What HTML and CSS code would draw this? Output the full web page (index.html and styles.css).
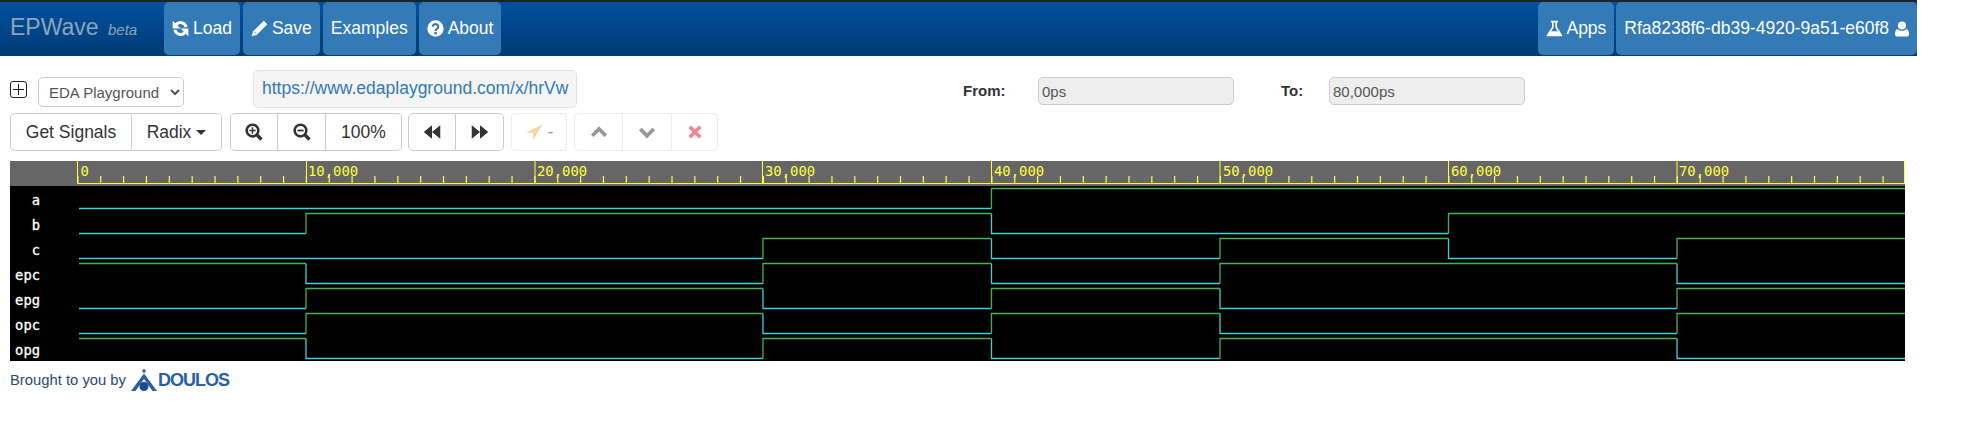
FILE: index.html
```html
<!DOCTYPE html>
<html lang="en">
<head>
    <meta charset="UTF-8">
    <title>EPWave</title>
    <link rel="stylesheet" href="styles.css">
</head>
<body>

<div class="navbar">
    <a class="brand">EPWave <small>beta</small></a>
    <a class="nav-btn">
        <svg class="ico" viewBox="0 0 24 24"><path d="M20 10A8.500 8.500 0 0 0 5.500 6.500L4 8" fill="none" stroke="#fff" stroke-width="4.200"/><path d="M1 1v11h11z" fill="#fff"/><path d="M4 14a8.500 8.500 0 0 0 14.500 3.500L20 16" fill="none" stroke="#fff" stroke-width="4.200"/><path d="M23 23V12H12z" fill="#fff"/></svg>
        Load
    </a>
    <a class="nav-btn">
        <svg class="ico" viewBox="0 0 24 24"><path d="M18 1l5 5L8 21l-7 2 2-7z" fill="#fff"/><path d="M4.500 16.500l3 3" stroke="#337ab7" stroke-width="1.200"/></svg>
        Save
    </a>
    <a class="nav-btn">Examples</a>
    <a class="nav-btn">
        <svg class="ico" viewBox="0 0 24 24"><circle cx="12" cy="12" r="11.500" fill="#fff"/><path d="M8 9.500a4 3.600 0 1 1 6.200 3c-1.500 1-2.200 1.200-2.200 3" fill="none" stroke="#337ab7" stroke-width="3"/><rect x="10.200" y="17" width="3.600" height="3.200" fill="#337ab7"/></svg>
        About
    </a>
    <div class="nav-right">
        <a class="nav-btn">
            <svg class="ico" viewBox="0 0 24 24"><path d="M7 1h10v2.500h-1.500v6.500L23 21.500c.5 1-.2 1.500-1 1.500H2c-.8 0-1.500-.5-1-1.500L8.500 10V3.500H7z" fill="#fff"/><path d="M10.800 3.500v7.200L7.500 16h9l-3.300-5.300V3.500z" fill="#337ab7"/></svg>
            Apps
        </a>
        <a class="nav-btn">
            Rfa8238f6-db39-4920-9a51-e60f8
            <svg class="ico ico-user" viewBox="0 0 24 26"><circle cx="12" cy="7" r="7" fill="#fff"/><path d="M4 13c2 2 5 3 8 3s6-1 8-3c3 1 4 5 4 9 0 2-1 4-4 4H4c-3 0-4-2-4-4 0-4 1-8 4-9z" fill="#fff"/></svg>
        </a>
    </div>
</div>

<div class="row-top">
    <span class="plus-box"></span>
    <select class="source">
        <option>EDA Playground</option>
    </select>
    <div class="share"><a>https://www.edaplayground.com/x/hrVw</a></div>
    <label class="range-label from">From:</label>
    <input class="range-input" type="text" value="0ps" disabled>
    <label class="range-label to">To:</label>
    <input class="range-input" type="text" value="80,000ps" disabled>
</div>

<div class="row-tools">
    <div class="btn-group">
        <button class="btn w-signals">Get Signals</button>
        <button class="btn w-radix">Radix <span class="caret"></span></button>
    </div>
    <div class="btn-group zoom-group">
        <button class="btn w-zoom">
            <svg class="tool-ico" viewBox="0 0 24 24"><circle cx="10" cy="10" r="7.800" fill="none" stroke="#333" stroke-width="3.400"/><path d="M15.500 15.500L22 22" stroke="#333" stroke-width="4.600"/><path d="M5.800 10h8.400M10 5.800v8.400" stroke="#333" stroke-width="2"/></svg>
        </button>
        <button class="btn w-zoom">
            <svg class="tool-ico" viewBox="0 0 24 24"><circle cx="10" cy="10" r="7.800" fill="none" stroke="#333" stroke-width="3.400"/><path d="M15.500 15.500L22 22" stroke="#333" stroke-width="4.600"/><path d="M5.800 10h8.400" stroke="#333" stroke-width="2.400"/></svg>
        </button>
        <button class="btn w-pct">100%</button>
    </div>
    <div class="btn-group nav-group">
        <button class="btn w-nav">
            <svg class="tool-ico" viewBox="0 0 24 24"><path d="M12 3v18L1 12zM23 3v18L12 12z" fill="#333"/></svg>
        </button>
        <button class="btn w-nav">
            <svg class="tool-ico" viewBox="0 0 24 24"><path d="M1 3v18l11-9zM12 3v18l11-9z" fill="#333"/></svg>
        </button>
    </div>
    <div class="btn-group off">
        <button class="btn w-cursor">
            <svg class="tool-ico" viewBox="0 0 24 24"><path d="M23 2L11 23V13H1z" fill="#f0ad4e"/></svg>
            -
        </button>
    </div>
    <div class="btn-group off">
        <button class="btn w-move">
            <svg class="tool-ico" viewBox="0 0 24 24"><path d="M3 17l9-9 9 9" fill="none" stroke="#333" stroke-width="5"/></svg>
        </button>
        <button class="btn w-move">
            <svg class="tool-ico" viewBox="0 0 24 24"><path d="M3 8l9 9 9-9" fill="none" stroke="#333" stroke-width="5"/></svg>
        </button>
        <button class="btn w-del">
            <svg class="tool-ico" viewBox="0 0 24 24"><path d="M5 5l14 14M19 5L5 19" fill="none" stroke="#e8132a" stroke-width="5"/></svg>
        </button>
    </div>
</div>

<svg class="wave" width="1895" height="200" viewBox="0 0 1895 200">
    <rect width="1895" height="25" fill="#666"/>
    <rect y="25" width="1895" height="175" fill="#000"/>

    <g class="ruler">
        <path d="M67.500 22.500H1895"/>
        <line class="minor" x1="67.300" y1="18.700" x2="1895" y2="18.700"/>
        <path d="M67.500 0V22M296.500 0V22M525 0V22M752.500 0V22M981.500 0V22M1210 0V22M1438.500 0V22M1667 0V22M1894.500 0V22"/>
    </g>
    <g class="labels">
        <text x="70.500" y="15">0</text>
        <text x="298" y="15">10,000</text>
        <text x="527" y="15">20,000</text>
        <text x="755" y="15">30,000</text>
        <text x="984" y="15">40,000</text>
        <text x="1213" y="15">50,000</text>
        <text x="1441" y="15">60,000</text>
        <text x="1669" y="15">70,000</text>
    </g>

    <g class="names">
        <text x="30" y="44">a</text>
        <text x="30" y="69">b</text>
        <text x="30" y="94">c</text>
        <text x="30" y="119">epc</text>
        <text x="30" y="144">epg</text>
        <text x="30" y="169">opc</text>
        <text x="30" y="194">opg</text>
    </g>

    <g class="low">
        <path d="M69 47.500H981.500"/>
        <path d="M69 72.500H296M981.500 52.500V72.500H1438.500"/>
        <path d="M69 97.500H753M981.500 77.500V97.500H1210M1438.500 77.500V97.500H1667"/>
        <path d="M296 102.500V122.500H753M981.500 102.500V122.500H1210M1667 102.500V122.500H1895"/>
        <path d="M69 147.500H296M753 127.500V147.500H981.500M1210 127.500V147.500H1667"/>
        <path d="M69 172.500H296M753 152.500V172.500H981.500M1210 152.500V172.500H1667"/>
        <path d="M296 177.500V197.500H753M981.500 177.500V197.500H1210M1667 177.500V197.500H1895"/>
    </g>
    <g class="high">
        <path d="M981.500 47.500V27.500H1895"/>
        <path d="M296 72.500V52.500H981.500M1438.500 72.500V52.500H1895"/>
        <path d="M753 97.500V77.500H981.500M1210 97.500V77.500H1438.500M1667 97.500V77.500H1895"/>
        <path d="M69 102.500H296M753 122.500V102.500H981.500M1210 122.500V102.500H1667"/>
        <path d="M296 147.500V127.500H753M981.500 147.500V127.500H1210M1667 147.500V127.500H1895"/>
        <path d="M296 172.500V152.500H753M981.500 172.500V152.500H1210M1667 172.500V152.500H1895"/>
        <path d="M69 177.500H296M753 197.500V177.500H981.500M1210 197.500V177.500H1667"/>
    </g>
</svg>

<div class="footer">
    <span>Brought to you by</span>
    <svg class="logo" viewBox="0 0 26 22"><circle cx="13" cy="2" r="1.800" fill="#2a5ea8"/><path d="M13 4.500L0 22h4.500L13 10l8.500 12H26z" fill="#2a5ea8"/><circle cx="13" cy="17.500" r="4.500" fill="#1c4a8c"/></svg>
    <span class="doulos">DOULOS</span>
</div>

</body>
</html>
```

FILE: styles.css
```css
body {
    margin: 0;
    width: 1963px;
    font-family: "Liberation Sans", Arial, sans-serif;
    font-size: 17.5px;
    color: #333;
    background-color: #fff;
}
.navbar {
    display: flex;
    width: 1917px;
    height: 54px;
    box-sizing: content-box;
    border-top: 2px solid #222;
    background-image: linear-gradient(to bottom, #00509f, #003b73);
}
.navbar .brand {
    width: 154px;
    padding-left: 10px;
    line-height: 50px;
    font-size: 23px;
    color: #8ea4ba;
}
.brand small {
    margin-left: 3px;
    font-size: 15px;
    font-style: italic;
}
.nav-btn {
    display: flex;
    align-items: center;
    gap: 4px;
    height: 53px;
    margin-right: 3px;
    padding: 0 8px;
    box-sizing: border-box;
    border-radius: 5px;
    background-color: #337ab7;
    color: #fff;
    white-space: nowrap;
}
.nav-right {
    display: flex;
    margin-left: auto;
}
.nav-right .nav-btn {
    gap: 3px;
    margin-right: 2px;
}
.nav-right .nav-btn:last-child {
    margin-right: 0;
}
.ico {
    width: 17px;
    height: 17px;
}
.ico-user {
    width: 14px;
    height: 16px;
    margin-left: 3px;
}
.row-top {
    display: flex;
    align-items: center;
    height: 38px;
    margin-top: 14px;
    padding-left: 10px;
}
.plus-box {
    position: relative;
    width: 15px;
    height: 15px;
    border: 1.5px solid #222;
    border-radius: 3px;
    margin-top: 1px;
}
.plus-box::before {
    content: "";
    position: absolute;
    left: 2px;
    right: 2px;
    top: 6.500px;
    height: 1.500px;
    background-color: #222;
}
.plus-box::after {
    content: "";
    position: absolute;
    top: 2px;
    bottom: 2px;
    left: 6.500px;
    width: 1.500px;
    background-color: #222;
}
.source {
    width: 146px;
    height: 30px;
    margin-left: 11px;
    margin-top: 6px;
    padding-left: 6px;
    border: 1px solid #ccc;
    border-radius: 5px;
    background-color: #fff;
    color: #555;
    font-family: "Liberation Sans", Arial, sans-serif;
    font-size: 15px;
}
.share {
    width: 324px;
    height: 38px;
    margin-left: 69px;
    padding-left: 8px;
    box-sizing: border-box;
    border: 1px solid #e3e3e3;
    border-radius: 5px;
    background-color: #f5f5f5;
    line-height: 35px;
    color: #337ab7;
    white-space: nowrap;
}
.range-label {
    font-size: 15px;
    font-weight: bold;
    margin-top: 2px;
}
.range-label.from {
    margin-left: 386px;
    width: 75px;
}
.range-label.to {
    margin-left: 47px;
    width: 48px;
}
.range-input {
    width: 196px;
    height: 28px;
    margin-top: 4px;
    padding: 0 3px;
    box-sizing: border-box;
    border: 1px solid #ccc;
    border-radius: 5px;
    background-color: #eee;
    color: #555;
    font-family: "Liberation Sans", Arial, sans-serif;
    font-size: 15px;
}
.row-tools {
    display: flex;
    gap: 7px;
    height: 38px;
    margin-top: 5px;
    padding-left: 10px;
}
.zoom-group {
    margin-left: 1px;
}
.nav-group {
    margin-left: -1px;
}
.btn-group {
    display: flex;
}
.btn {
    display: flex;
    align-items: center;
    justify-content: center;
    gap: 5px;
    padding: 0;
    height: 38px;
    box-sizing: border-box;
    border: 1px solid #ccc;
    border-left-width: 0;
    background-color: #fff;
    color: #333;
    font-family: "Liberation Sans", Arial, sans-serif;
    font-size: 17.5px;
}
.btn:first-child {
    border-left-width: 1px;
    border-radius: 5px 0 0 5px;
}
.btn:last-child {
    border-radius: 0 5px 5px 0;
}
.btn:only-child {
    border-radius: 5px;
}
.btn-group.off .btn {
    border-color: #ebebeb;
    color: #999;
}
.btn-group.off .tool-ico {
    opacity: .5;
}
.w-signals { width: 122px; }
.w-radix { width: 90px; }
.w-zoom { width: 48px; }
.w-pct { width: 76px; }
.w-nav { width: 48px; }
.w-cursor { width: 56px; }
.w-move { width: 49px; }
.w-del { width: 46px; }
.caret {
    width: 0;
    height: 0;
    border-top: 5px solid #333;
    border-left: 5px solid transparent;
    border-right: 5px solid transparent;
}
.tool-ico {
    width: 18px;
    height: 18px;
}
.wave {
    display: block;
    margin: 10px 0 0 10px;
}
.wave path, .wave line {
    fill: none;
}
.ruler path {
    stroke: #ffff40;
    stroke-width: 1;
}
.ruler .minor {
    stroke: #ffff40;
    stroke-width: 7.500;
    stroke-dasharray: 1.200 21.650;
}
.labels text {
    font-family: "DejaVu Sans Mono", monospace;
    font-size: 13.900px;
    fill: #ffff40;
}
.names text {
    font-family: "DejaVu Sans Mono", monospace;
    font-size: 13.800px;
    fill: #fff;
    stroke: #fff;
    stroke-width: .3px;
    text-anchor: end;
}
.low path {
    stroke: #40d0d8;
    stroke-width: 1.300;
}
.high path {
    stroke: #4caf50;
    stroke-width: 1.300;
}
.footer {
    display: flex;
    align-items: center;
    height: 30px;
    margin-top: 4px;
    margin-left: 10px;
    font-size: 14.800px;
    color: #2b4a78;
}
.logo {
    width: 26px;
    height: 22px;
    margin-left: 5px;
}
.doulos {
    margin-left: 1px;
    font-size: 18px;
    font-weight: bold;
    letter-spacing: -1px;
    color: #2a5ea8;
}
```
